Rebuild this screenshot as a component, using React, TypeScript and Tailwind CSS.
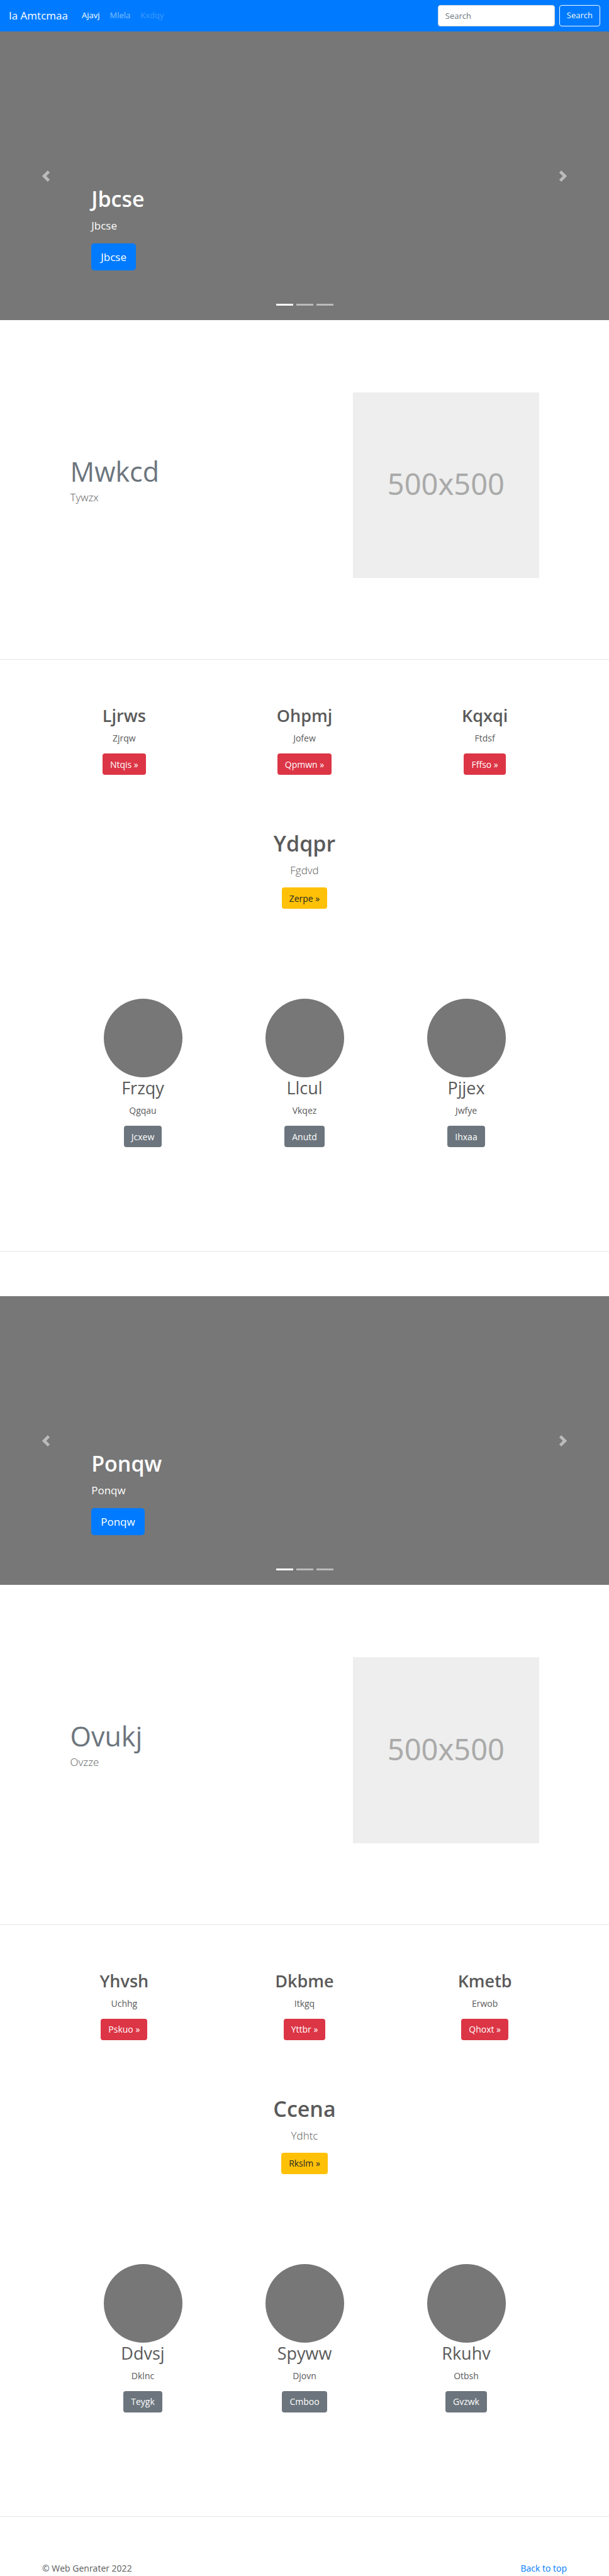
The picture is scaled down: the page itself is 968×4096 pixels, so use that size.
import React from "react";

type Card = { title: string; text: string; action: string };
type Group = {
  hero: string;
  feature: { title: string; text: string };
  columns: Card[];
  callout: Card;
  people: Card[];
};

const groups: Group[] = [
  {
    hero: "Jbcse",
    feature: { title: "Mwkcd", text: "Tywzx" },
    columns: [
      { title: "Ljrws", text: "Zjrqw", action: "Ntqis »" },
      { title: "Ohpmj", text: "Jofew", action: "Qpmwn »" },
      { title: "Kqxqi", text: "Ftdsf", action: "Fffso »" },
    ],
    callout: { title: "Ydqpr", text: "Fgdvd", action: "Zerpe »" },
    people: [
      { title: "Frzqy", text: "Qgqau", action: "Jcxew" },
      { title: "Llcul", text: "Vkqez", action: "Anutd" },
      { title: "Pjjex", text: "Jwfye", action: "Ihxaa" },
    ],
  },
  {
    hero: "Ponqw",
    feature: { title: "Ovukj", text: "Ovzze" },
    columns: [
      { title: "Yhvsh", text: "Uchhg", action: "Pskuo »" },
      { title: "Dkbme", text: "Itkgq", action: "Yttbr »" },
      { title: "Kmetb", text: "Erwob", action: "Qhoxt »" },
    ],
    callout: { title: "Ccena", text: "Ydhtc", action: "Rkslm »" },
    people: [
      { title: "Ddvsj", text: "Dklnc", action: "Teygk" },
      { title: "Spyww", text: "Djovn", action: "Cmboo" },
      { title: "Rkuhv", text: "Otbsh", action: "Gvzwk" },
    ],
  },
];

const tones = {
  danger: "bg-[#dc3545] text-white",
  warning: "bg-[#ffc107] text-[#212529]",
  secondary: "bg-[#6c757d] text-white",
};

function Button({ tone, children }: { tone: keyof typeof tones; children: React.ReactNode }) {
  return (
    <a href="#" className={`inline-flex h-[34px] items-center rounded px-3 text-[14px] ${tones[tone]}`}>
      {children}
    </a>
  );
}

function Chevron({ flip }: { flip?: boolean }) {
  return (
    <svg viewBox="0 0 8 8" className="size-[18px] fill-white" aria-hidden="true">
      {flip ? (
        <path d="M2.75 0l-1.5 1.5 2.5 2.5-2.5 2.5 1.5 1.5 4-4-4-4z" />
      ) : (
        <path d="M5.25 0l-4 4 4 4 1.5-1.5-2.5-2.5 2.5-2.5-1.5-1.5z" />
      )}
    </svg>
  );
}

function Navbar() {
  return (
    <nav className="flex h-[50px] items-center bg-[#007bff] px-[14px] text-[13px] text-white">
      <a href="#" className="mr-[22px] text-[17px]">Ia Amtcmaa</a>
      <div className="flex gap-4">
        <a href="#">Ajavj</a>
        <a href="#" className="text-white/50">Mlela</a>
        <span className="text-white/25">Kxdqy</span>
      </div>
      <form className="ml-auto flex gap-[7px]">
        <input
          type="text"
          placeholder="Search"
          aria-label="Search"
          className="h-[34px] w-[186px] rounded border border-[#ced4da] bg-white px-[11px] text-[#495057] placeholder:text-[#6c757d]"
        />
        <button type="button" className="h-[34px] rounded border border-[#f8f9fa] px-[11px] text-[#f8f9fa]">
          Search
        </button>
      </form>
    </nav>
  );
}

function Hero({ label }: { label: string }) {
  return (
    <section className="relative flex h-[459px] bg-[#777] text-white">
      <button type="button" aria-label="Previous" className="flex w-[15%] items-center justify-center opacity-50">
        <Chevron />
      </button>
      <div className="flex flex-1 flex-col items-start justify-end pb-[79px] text-[17px]">
        <h1 className="mb-[7px] text-[34px] leading-[43px] font-semibold">{label}</h1>
        <p className="mb-[15px] leading-[27px]">{label}</p>
        <a href="#" className="flex h-[43px] items-center rounded-[5px] bg-[#007bff] px-[15px]">{label}</a>
      </div>
      <button type="button" aria-label="Next" className="flex w-[15%] items-center justify-center opacity-50">
        <Chevron flip />
      </button>
      <div className="absolute inset-x-0 bottom-[23px] flex justify-center gap-[5px]">
        <span className="h-[3px] w-[27px] bg-white" />
        <span className="h-[3px] w-[27px] bg-white/50" />
        <span className="h-[3px] w-[27px] bg-white/50" />
      </div>
    </section>
  );
}

function Feature({ title, text }: { title: string; text: string }) {
  return (
    <section className="mx-auto grid max-w-[771px] grid-cols-[7fr_5fr] items-center pt-[115px] pb-[129px]">
      <div className="px-[13px] pb-4">
        <h2 className="text-[43px] leading-[54px] text-[#6c757d]">{title}</h2>
        <p className="text-[17px] leading-[27px] font-light">{text}</p>
      </div>
      <div className="px-[13px]">
        <div className="flex aspect-square items-center justify-center bg-[#eee] pb-1 font-['Noto_Sans',sans-serif] text-[47px] text-[#aaa]">
          500x500
        </div>
      </div>
    </section>
  );
}

function Section({ group }: { group: Group }) {
  return (
    <>
      <Hero label={group.hero} />
      <Feature {...group.feature} />
      <hr className="border-[#e5e5e5]" />
      <section className="mx-auto grid max-w-[860px] grid-cols-3 pt-[72px] text-center">
        {group.columns.map((c) => (
          <div key={c.title}>
            <h2 className="mb-[8px] text-[27px] leading-[34px] font-semibold">{c.title}</h2>
            <p className="mb-[13px] leading-[22px]">{c.text}</p>
            <Button tone="danger">{c.action}</Button>
          </div>
        ))}
      </section>
      <section className="pt-[88px] text-center">
        <h1 className="mb-[7px] text-[34px] leading-[43px] font-semibold">{group.callout.title}</h1>
        <p className="mb-[14px] text-[17px] leading-[27px] font-light">{group.callout.text}</p>
        <Button tone="warning">{group.callout.action}</Button>
      </section>
      <section className="mx-auto grid max-w-[771px] grid-cols-3 pt-[143px] pb-[165px] text-center">
        {group.people.map((p) => (
          <div key={p.title}>
            <div className="mx-auto size-[125px] rounded-full bg-[#777]" />
            <h2 className="mb-[8px] text-[27px] leading-[34px]">{p.title}</h2>
            <p className="mb-[13px] leading-[22px]">{p.text}</p>
            <Button tone="secondary">{p.action}</Button>
          </div>
        ))}
      </section>
      <hr className="mb-[71px] border-[#e5e5e5]" />
    </>
  );
}

export default function App() {
  return (
    <div className="bg-white font-['Open_Sans','Noto_Sans',sans-serif] text-[14px] text-[#5a5a5a]">
      <Navbar />
      <main>
        {groups.map((g) => (
          <Section key={g.hero} group={g} />
        ))}
      </main>
      <footer className="mx-auto flex max-w-[860px] justify-between px-[13px] leading-[22px]">
        <p>© Web Genrater 2022</p>
        <a href="#" className="text-[#007bff]">Back to top</a>
      </footer>
    </div>
  );
}
